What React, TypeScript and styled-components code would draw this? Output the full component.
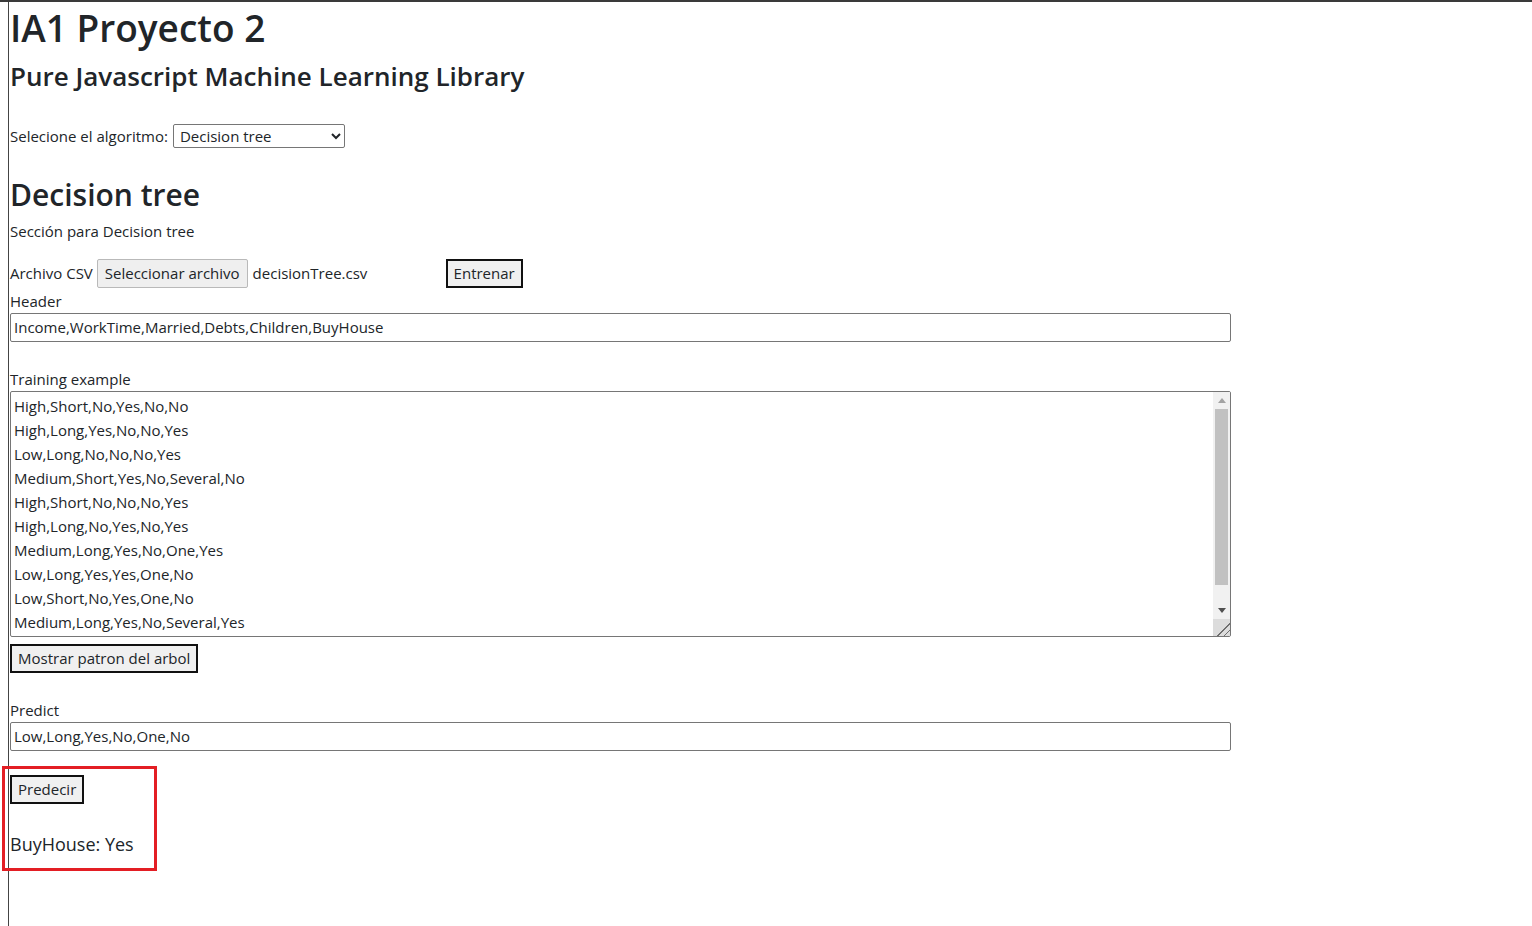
import React from "react";
import styled, { createGlobalStyle } from "styled-components";

const Global = createGlobalStyle`
  html, body { margin: 0; padding: 0; background: #fff; }
  body {
    font-family: "Open Sans", "Noto Sans", sans-serif;
    font-size: 15px;
    line-height: 24px;
    color: #212529;
  }
`;

const Frame = styled.div`
  position: relative;
  min-height: 926px;
  box-sizing: border-box;
  border-top: 2px solid #3a3a3a;
  padding-left: 8px;
`;

const Page = styled.div`
  border-left: 1px solid #444;
  min-height: 924px;
  box-sizing: border-box;
  padding-left: 1px;
  display: flex;
  flex-direction: column;
  align-items: flex-start;
`;

const Title = styled.h1`
  margin: 4px 0 0;
  font-size: 37px;
  font-weight: 600;
  line-height: 1.2;
`;

const Subtitle = styled.h3`
  margin: 11px 0 0;
  font-size: 26px;
  font-weight: 600;
  line-height: 1.2;
`;

const Row = styled.div<{ $mt?: number }>`
  display: flex;
  align-items: center;
  margin-top: ${(p) => p.$mt ?? 0}px;
`;

const Label = styled.span`
  font-size: 15px;
`;

const Select = styled.select`
  margin-left: 5px;
  width: 172px;
  height: 24px;
  font-family: inherit;
  font-size: 15px;
  border: 1px solid #767676;
  border-radius: 2px;
  background: #fff;
  color: #212529;
  padding: 0 2px;
`;

const SectionTitle = styled.h2`
  margin: 29px 0 0;
  font-size: 30px;
  font-weight: 600;
  line-height: 1.2;
`;

const Text = styled.p<{ $mt?: number }>`
  margin: ${(p) => p.$mt ?? 0}px 0 0;
  font-size: 15px;
  line-height: 24px;
`;

const FileButton = styled.span`
  margin-left: 4px;
  height: 29px;
  box-sizing: border-box;
  display: inline-flex;
  align-items: center;
  padding: 0 7px;
  border: 1px solid #b9b9b9;
  border-radius: 2px;
  background: #efefef;
  font-size: 15px;
`;

const FileName = styled.span`
  margin-left: 5px;
  width: 193px;
  font-size: 15px;
`;

const Button = styled.button`
  height: 29px;
  box-sizing: border-box;
  padding: 0 6px;
  border: 2px solid #111;
  border-radius: 0;
  background: #f0f0f0;
  font-family: inherit;
  font-size: 15px;
  line-height: 24px;
  color: #212529;
`;

const Input = styled.input`
  width: 1221px;
  height: 29px;
  box-sizing: border-box;
  border: 1px solid #767676;
  border-radius: 2px;
  padding: 0 3px;
  font-family: inherit;
  font-size: 15px;
  color: #212529;
  margin: 0;
`;

const AreaWrap = styled.div`
  position: relative;
  width: 1221px;
  height: 246px;
`;

const TextArea = styled.textarea`
  display: block;
  width: 100%;
  height: 100%;
  box-sizing: border-box;
  border: 1px solid #767676;
  border-radius: 2px;
  padding: 2px 20px 2px 3px;
  font-family: inherit;
  font-size: 15px;
  line-height: 24px;
  color: #212529;
  margin: 0;
  overflow: hidden;
  resize: none;
`;

const ScrollBar = styled.div`
  position: absolute;
  top: 1px;
  right: 1px;
  bottom: 1px;
  width: 17px;
  background: #f1f1f1;
  display: flex;
  flex-direction: column;
`;

const ArrowButton = styled.div`
  height: 17px;
  flex: none;
  display: flex;
  align-items: center;
  justify-content: center;
`;

const Track = styled.div`
  flex: 1;
  display: flex;
  flex-direction: column;
  padding: 0 2px;
`;

const Thumb = styled.div`
  height: 176px;
  background: #c1c1c1;
`;

const Corner = styled.div`
  height: 17px;
  flex: none;
  background-color: #dcdcdc;
  background-image: linear-gradient(
    135deg,
    transparent 0 60%,
    #6e6e6e 60% 65%,
    transparent 65% 80%,
    #6e6e6e 80% 85%,
    transparent 85%
  );
`;

const Result = styled.div`
  margin-top: 27px;
  font-size: 18px;
  line-height: 27px;
`;

const Annotation = styled.div`
  position: absolute;
  left: 2px;
  top: 764px;
  width: 149px;
  height: 99px;
  border: 3px solid #e31e24;
  pointer-events: none;
`;

const training = [
  "High,Short,No,Yes,No,No",
  "High,Long,Yes,No,No,Yes",
  "Low,Long,No,No,No,Yes",
  "Medium,Short,Yes,No,Several,No",
  "High,Short,No,No,No,Yes",
  "High,Long,No,Yes,No,Yes",
  "Medium,Long,Yes,No,One,Yes",
  "Low,Long,Yes,Yes,One,No",
  "Low,Short,No,Yes,One,No",
  "Medium,Long,Yes,No,Several,Yes",
  "Medium,Short,No,Yes,One,No",
  "High,Long,Yes,Yes,Several,Yes",
].join("\n");

export default function App() {
  return (
    <>
      <Global />
      <Frame>
        <Page>
          <Title>IA1 Proyecto 2</Title>
          <Subtitle>Pure Javascript Machine Learning Library</Subtitle>
          <Row $mt={31}>
            <Label>Selecione el algoritmo:</Label>
            <Select defaultValue="dt">
              <option value="dt">Decision tree</option>
            </Select>
          </Row>
          <SectionTitle>Decision tree</SectionTitle>
          <Text $mt={6}>Sección para Decision tree</Text>
          <Row $mt={16}>
            <Label>Archivo CSV</Label>
            <FileButton>Seleccionar archivo</FileButton>
            <FileName>decisionTree.csv</FileName>
            <Button>Entrenar</Button>
          </Row>
          <Text $mt={1}>Header</Text>
          <Input defaultValue="Income,WorkTime,Married,Debts,Children,BuyHouse" />
          <Text $mt={25}>Training example</Text>
          <AreaWrap>
            <TextArea defaultValue={training} />
            <ScrollBar>
              <ArrowButton>
                <svg width="8" height="5" viewBox="0 0 8 5">
                  <path d="M0 5 L4 0 L8 5z" fill="#a3a3a3" />
                </svg>
              </ArrowButton>
              <Track>
                <Thumb />
              </Track>
              <ArrowButton>
                <svg width="8" height="5" viewBox="0 0 8 5">
                  <path d="M0 0 L4 5 L8 0z" fill="#505050" />
                </svg>
              </ArrowButton>
              <Corner />
            </ScrollBar>
          </AreaWrap>
          <Row $mt={7}>
            <Button>Mostrar patron del arbol</Button>
          </Row>
          <Text $mt={25}>Predict</Text>
          <Input defaultValue="Low,Long,Yes,No,One,No" />
          <Row $mt={24}>
            <Button>Predecir</Button>
          </Row>
          <Result>BuyHouse: Yes</Result>
        </Page>
        <Annotation />
      </Frame>
    </>
  );
}
